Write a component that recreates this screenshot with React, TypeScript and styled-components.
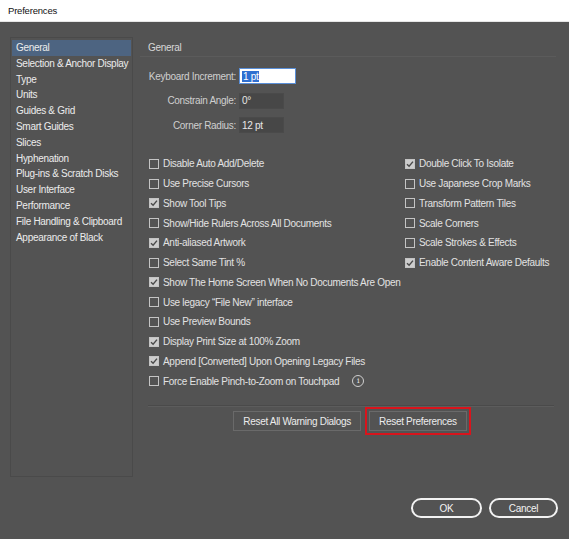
import React from "react";
import styled, { createGlobalStyle } from "styled-components";

const Global = createGlobalStyle`
  html, body { margin: 0; padding: 0; background: #535353; }
  body { font-family: "Liberation Sans", Arial, sans-serif; }
`;

const Window = styled.div`
  width: 569px;
  height: 539px;
  display: flex;
  flex-direction: column;
  background: #535353;
  overflow: hidden;
`;

const TitleBar = styled.div`
  height: 22px;
  flex: none;
  background: #ffffff;
  display: flex;
  align-items: center;
  padding-left: 8px;
  font-size: 9.5px;
  letter-spacing: -0.2px;
  color: #111;
  border-bottom: 1px solid #e6e6e6;
  box-sizing: border-box;
`;

const Body = styled.div`
  flex: 1;
  display: flex;
  flex-direction: column;
  font-size: 10px;
  letter-spacing: -0.3px;
  color: #e4e4e4;
`;

const Main = styled.div`
  display: flex;
  padding: 15px 13px 0 10px;
  gap: 7px;
`;

const Sidebar = styled.div`
  width: 123px;
  height: 440px;
  box-sizing: border-box;
  border: 1px solid #4a4a4a;
  padding: 2px 1px;
  display: flex;
  flex-direction: column;
`;

const NavItem = styled.div<{ $active?: boolean }>`
  height: 15.8px;
  line-height: 15.8px;
  padding-left: 4px;
  white-space: nowrap;
  color: #ececec;
  background: ${(p) => (p.$active ? "#4d6481" : "transparent")};
`;

const Content = styled.div`
  flex: 1;
  display: flex;
  flex-direction: column;
`;

const SectionTitle = styled.div`
  height: 17px;
  line-height: 17px;
  padding-left: 8px;
  margin-top: 2px;
  color: #d8d8d8;
  border-bottom: 1px solid #5b5b5b;
`;

const Fields = styled.div`
  display: grid;
  grid-template-columns: 89px auto;
  row-gap: 8.5px;
  column-gap: 3px;
  margin-top: 11px;
  padding-left: 7px;
  align-items: center;
`;

const FieldLabel = styled.label`
  text-align: right;
  color: #cfcfcf;
  white-space: nowrap;
`;

const Input = styled.div<{ $w: number; $focused?: boolean }>`
  width: ${(p) => p.$w}px;
  height: 16px;
  box-sizing: border-box;
  display: flex;
  align-items: center;
  padding-left: 2px;
  background: ${(p) => (p.$focused ? "#ffffff" : "#474747")};
  border: 1px solid ${(p) => (p.$focused ? "#5a8fd8" : "#4a4a4a")};
  color: #e8e8e8;
`;

const Selected = styled.span`
  background: #2f6fd0;
  color: #fff;
  padding: 0 1px;
`;

const Options = styled.div`
  display: grid;
  grid-template-columns: 256px auto;
  margin-top: 21px;
  padding-left: 9px;
`;

const OptionColumn = styled.div`
  display: flex;
  flex-direction: column;
`;

const Option = styled.div`
  height: 19.75px;
  display: flex;
  align-items: center;
  gap: 4px;
  white-space: nowrap;
  color: #e2e2e2;
`;

const Box = styled.span<{ $checked?: boolean }>`
  width: 10px;
  height: 10px;
  box-sizing: border-box;
  flex: none;
  border: 1px solid #c4c4c4;
  background: ${(p) => (p.$checked ? "#cdcdcd" : "transparent")};
  display: flex;
  align-items: center;
  justify-content: center;
`;

const InfoIcon = styled.span`
  margin-left: 9px;
  width: 10px;
  height: 10px;
  border: 1px solid #cfcfcf;
  border-radius: 50%;
  font-size: 8px;
  line-height: 10px;
  letter-spacing: 0;
  text-align: center;
  font-family: "DejaVu Serif", serif;
  color: #e0e0e0;
`;

const Divider = styled.div`
  margin-top: 14px;
  margin-left: 8px;
  margin-right: 2px;
  border-top: 1px solid #4a4a4a;
  border-bottom: 1px solid #5c5c5c;
`;

const ResetRow = styled.div`
  display: flex;
  justify-content: center;
  gap: 8px;
  margin-top: 4px;
  padding-left: 4px;
`;

const FlatButton = styled.button<{ $highlight?: boolean }>`
  height: 20px;
  padding: 0 9px;
  font: inherit;
  letter-spacing: inherit;
  color: #ececec;
  background: #535353;
  border: 1px solid #6a6a6a;
  outline: ${(p) => (p.$highlight ? "2px solid #d9141c" : "none")};
  outline-offset: 2px;
`;

const Footer = styled.div`
  display: flex;
  justify-content: flex-end;
  gap: 7px;
  padding: 21px 11px 0 0;
`;

const PillButton = styled.button<{ $w: number }>`
  width: ${(p) => p.$w}px;
  height: 20px;
  border-radius: 10px;
  border: 2px solid #f2f2f2;
  background: #535353;
  color: #f2f2f2;
  font: inherit;
  letter-spacing: inherit;
`;

const Check = () => (
  <svg width="8" height="8" viewBox="0 0 8 8">
    <path d="M1 4.2 L3.1 6.3 L7 1.6" fill="none" stroke="#4a4a4a" strokeWidth="1.4" />
  </svg>
);

const nav = [
  "General",
  "Selection & Anchor Display",
  "Type",
  "Units",
  "Guides & Grid",
  "Smart Guides",
  "Slices",
  "Hyphenation",
  "Plug-ins & Scratch Disks",
  "User Interface",
  "Performance",
  "File Handling & Clipboard",
  "Appearance of Black",
];

const left: [string, boolean][] = [
  ["Disable Auto Add/Delete", false],
  ["Use Precise Cursors", false],
  ["Show Tool Tips", true],
  ["Show/Hide Rulers Across All Documents", false],
  ["Anti-aliased Artwork", true],
  ["Select Same Tint %", false],
  ["Show The Home Screen When No Documents Are Open", true],
  ["Use legacy \u201CFile New\u201D interface", false],
  ["Use Preview Bounds", false],
  ["Display Print Size at 100% Zoom", true],
  ["Append [Converted] Upon Opening Legacy Files", true],
  ["Force Enable Pinch-to-Zoom on Touchpad", false],
];

const right: [string, boolean][] = [
  ["Double Click To Isolate", true],
  ["Use Japanese Crop Marks", false],
  ["Transform Pattern Tiles", false],
  ["Scale Corners", false],
  ["Scale Strokes & Effects", false],
  ["Enable Content Aware Defaults", true],
];

const OptionRow = ({ label, checked, info }: { label: string; checked: boolean; info?: boolean }) => (
  <Option>
    <Box $checked={checked}>{checked && <Check />}</Box>
    <span>{label}</span>
    {info && <InfoIcon>i</InfoIcon>}
  </Option>
);

export default function App() {
  return (
    <Window>
      <Global />
      <TitleBar>Preferences</TitleBar>
      <Body>
        <Main>
          <Sidebar>
            {nav.map((n, i) => (
              <NavItem key={n} $active={i === 0}>
                {n}
              </NavItem>
            ))}
          </Sidebar>
          <Content>
            <SectionTitle>General</SectionTitle>
            <Fields>
              <FieldLabel>Keyboard Increment:</FieldLabel>
              <Input $w={57} $focused>
                <Selected>1 pt</Selected>
              </Input>
              <FieldLabel>Constrain Angle:</FieldLabel>
              <Input $w={45}>0°</Input>
              <FieldLabel>Corner Radius:</FieldLabel>
              <Input $w={45}>12 pt</Input>
            </Fields>
            <Options>
              <OptionColumn>
                {left.map(([l, c], i) => (
                  <OptionRow key={l} label={l} checked={c} info={i === left.length - 1} />
                ))}
              </OptionColumn>
              <OptionColumn>
                {right.map(([l, c]) => (
                  <OptionRow key={l} label={l} checked={c} />
                ))}
              </OptionColumn>
            </Options>
            <Divider />
            <ResetRow>
              <FlatButton>Reset All Warning Dialogs</FlatButton>
              <FlatButton $highlight>Reset Preferences</FlatButton>
            </ResetRow>
          </Content>
        </Main>
        <Footer>
          <PillButton $w={71}>OK</PillButton>
          <PillButton $w={69}>Cancel</PillButton>
        </Footer>
      </Body>
    </Window>
  );
}
